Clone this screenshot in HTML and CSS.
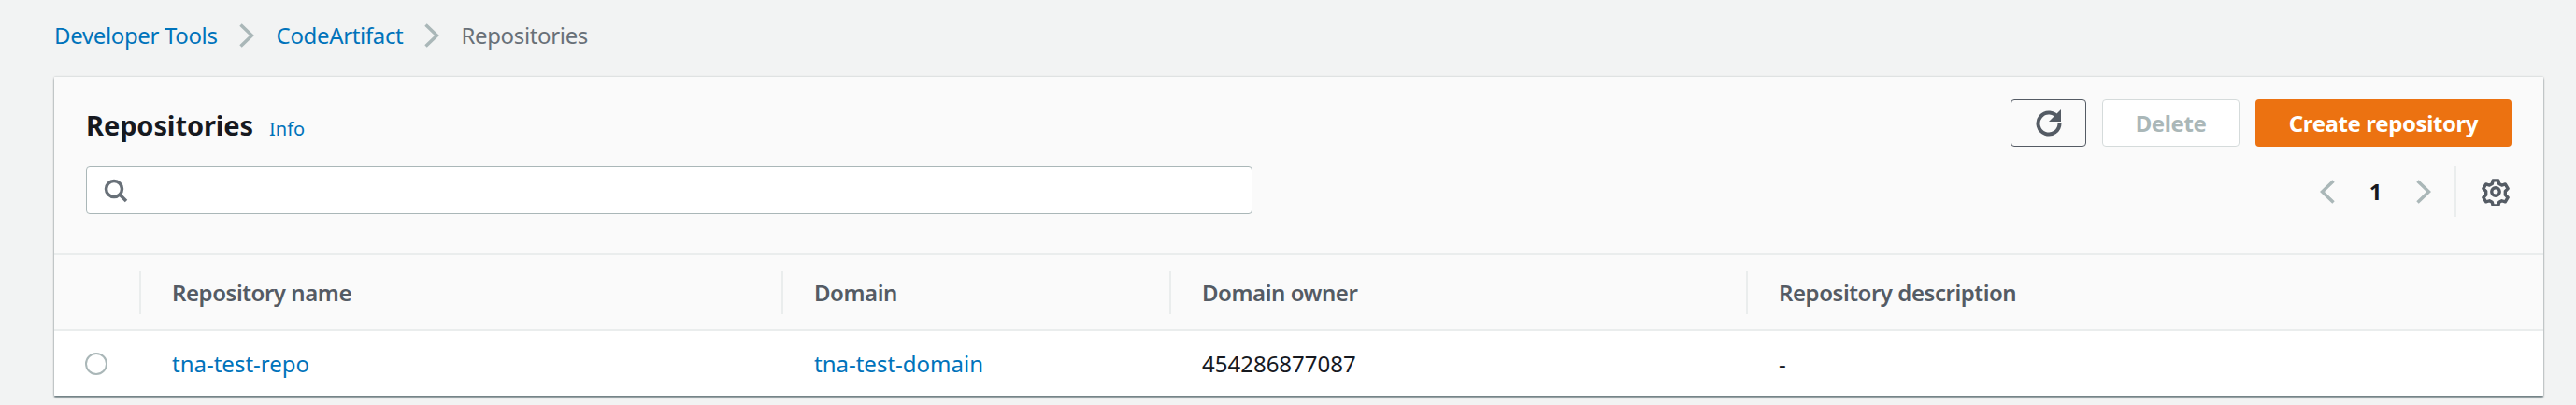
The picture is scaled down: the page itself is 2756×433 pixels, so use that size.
FILE: index.html
```html
<!DOCTYPE html>
<html lang="en">
<head>
<meta charset="utf-8">
<title>Repositories</title>
<link rel="stylesheet" href="styles.css">
</head>
<body>
<nav class="crumbs">
  <a class="link" href="#">Developer Tools</a>
  <svg class="crumb-sep" viewBox="0 0 16 26"><path d="M1.5 1.5l12 11.5-12 11.5"/></svg>
  <a class="link" href="#">CodeArtifact</a>
  <svg class="crumb-sep crumb-sep-last" viewBox="0 0 16 26"><path d="M1.5 1.5l12 11.5-12 11.5"/></svg>
  <span class="crumb-current">Repositories</span>
</nav>
<main class="card">
  <header class="head">
    <div class="head-left">
      <div class="title-row">
        <h1 class="title">Repositories</h1>
        <a class="link info" href="#">Info</a>
      </div>
      <div class="search">
        <svg class="search-icon" viewBox="0 0 26 26"><circle cx="11" cy="11" r="8.5"/><path d="M17 17l7 7"/></svg>
      </div>
    </div>
    <div class="head-right">
      <div class="actions">
        <button class="btn btn-refresh" aria-label="Refresh">
          <svg class="refresh-icon" viewBox="0 0 28 29"><path d="M23.96 9.25A11.5 11.5 0 1 0 25.5 15"/><path class="solid" d="M27 0v13H14z"/></svg>
        </button>
        <button class="btn btn-delete">Delete</button>
        <button class="btn btn-create">Create repository</button>
      </div>
      <div class="tools">
        <svg class="chev" viewBox="0 0 16 26"><path d="M14.5 1.5L2.5 13l12 11.5"/></svg>
        <span class="page">1</span>
        <svg class="chev" viewBox="0 0 16 26"><path d="M1.5 1.5l12 11.5-12 11.5"/></svg>
        <span class="tool-sep"></span>
        <svg class="gear" viewBox="0 0 32 32"><circle cx="16" cy="16" r="4.5"/><path d="M13 3h6l1 4 3 1.6 4-1.2 3 5-3 3v4.2l3 3-3 5-4-1.2-3 1.6-1 4h-6l-1-4-3-1.6-4 1.2-3-5 3-3v-4.2l-3-3 3-5 4 1.2 3-1.6z"/></svg>
      </div>
    </div>
  </header>
  <div class="grid-row grid-head">
    <div class="cell"></div>
    <div class="cell th">Repository name</div>
    <div class="cell th">Domain</div>
    <div class="cell th">Domain owner</div>
    <div class="cell th">Repository description</div>
  </div>
  <div class="grid-row grid-body">
    <div class="cell radio-cell"><span class="radio"></span></div>
    <div class="cell"><a class="link" href="#">tna-test-repo</a></div>
    <div class="cell"><a class="link" href="#">tna-test-domain</a></div>
    <div class="cell">454286877087</div>
    <div class="cell">-</div>
  </div>
</main>
</body>
</html>
```
FILE: styles.css
```css
* { box-sizing: border-box; }
html, body { margin: 0; height: 100%; }
body {
  background: #f2f3f3;
  color: #16191f;
  font-family: "Noto Sans", "Open Sans", sans-serif;
  font-size: 24px;
  line-height: 32px;
  padding: 0 35px 0 58px;
  overflow: hidden;
}
.link { color: #0073bb; text-decoration: none; }
.crumbs {
  display: flex;
  align-items: center;
  height: 82px;
  padding-bottom: 6px;
  letter-spacing: -0.35px;
}
.crumb-sep {
  width: 16px;
  height: 26px;
  margin: 0 24px 0 23px;
  fill: none;
  stroke: #aab7b8;
  stroke-width: 3.5;
}
.crumb-sep-last { margin-right: 23px; }
.crumb-current { color: #687078; }
.card {
  background: #fff;
  height: 341px;
  box-shadow: 0 2px 2px rgba(0, 28, 36, .5), 0 0 2px rgba(0, 28, 36, .3);
  border-radius: 1px;
  overflow: hidden;
}
.head {
  display: flex;
  justify-content: space-between;
  height: 191px;
  padding: 24px 34px 0;
  background: #fafafa;
  border-bottom: 2px solid #eaeded;
}
.title-row { display: flex; align-items: baseline; gap: 17px; height: 72px; padding-top: 10px; }
.title { margin: 0; font-size: 29px; font-weight: 700; line-height: 36px; letter-spacing: -0.1px; }
.info { font-size: 20px; }
.search {
  width: 1248px;
  height: 51px;
  background: #fff;
  border: 1px solid #aab7b8;
  border-radius: 4px;
  display: flex;
  align-items: center;
  padding-left: 18px;
}
.search-icon {
  width: 26px;
  height: 26px;
  fill: none;
  stroke: #687078;
  stroke-width: 3.5;
}
.head-right { display: flex; flex-direction: column; align-items: flex-end; }
.actions { display: flex; gap: 17px; }
.btn {
  height: 51px;
  border-radius: 4px;
  font: 700 24px/1 "Noto Sans", "Open Sans", sans-serif;
  letter-spacing: -0.4px;
  background: #fff;
  padding: 0;
  display: flex;
  align-items: center;
  justify-content: center;
}
.btn-refresh { width: 81px; border: 1px solid #545b64; background: #fafafa; }
.refresh-icon { width: 28px; height: 29px; fill: none; stroke: #545b64; stroke-width: 4; }
.refresh-icon .solid { fill: #545b64; stroke: none; }
.btn-delete { width: 147px; border: 1px solid #d5dbdb; color: #aab7b8; }
.btn-create { width: 274px; border: 0; background: #ec7211; color: #fff; }
.tools { display: flex; align-items: center; height: 60px; margin-top: 18px; }
.chev { width: 16px; height: 26px; fill: none; stroke: #aab7b8; stroke-width: 3.5; }
.page { width: 87px; text-align: center; font-weight: 700; }
.tool-sep { width: 2px; height: 54px; background: #eaeded; margin: 0 27px 0 25px; }
.gear { width: 30px; height: 30px; margin-right: 2px; fill: none; stroke: #545b64; stroke-width: 3.6; stroke-linejoin: round; }
.grid-row {
  display: grid;
  grid-template-columns: 93px 687px 415px 617px 1fr;
  align-items: center;
}
.grid-head {
  height: 81px;
  background: #fafafa;
  border-bottom: 2px solid #eaeded;
}
.grid-body { height: 69px; background: #fff; }
.cell { padding-left: 33px; }
.grid-head .cell { height: 46px; line-height: 46px; border-right: 2px solid #eaeded; }
.grid-head .cell:last-child { border-right: 0; }
.th { color: #545b64; font-weight: 600; letter-spacing: -0.45px; }
.radio-cell { padding-left: 33px; display: flex; }
.radio {
  width: 24px;
  height: 24px;
  border: 2px solid #aab7b8;
  border-radius: 50%;
  background: #fff;
}
```
